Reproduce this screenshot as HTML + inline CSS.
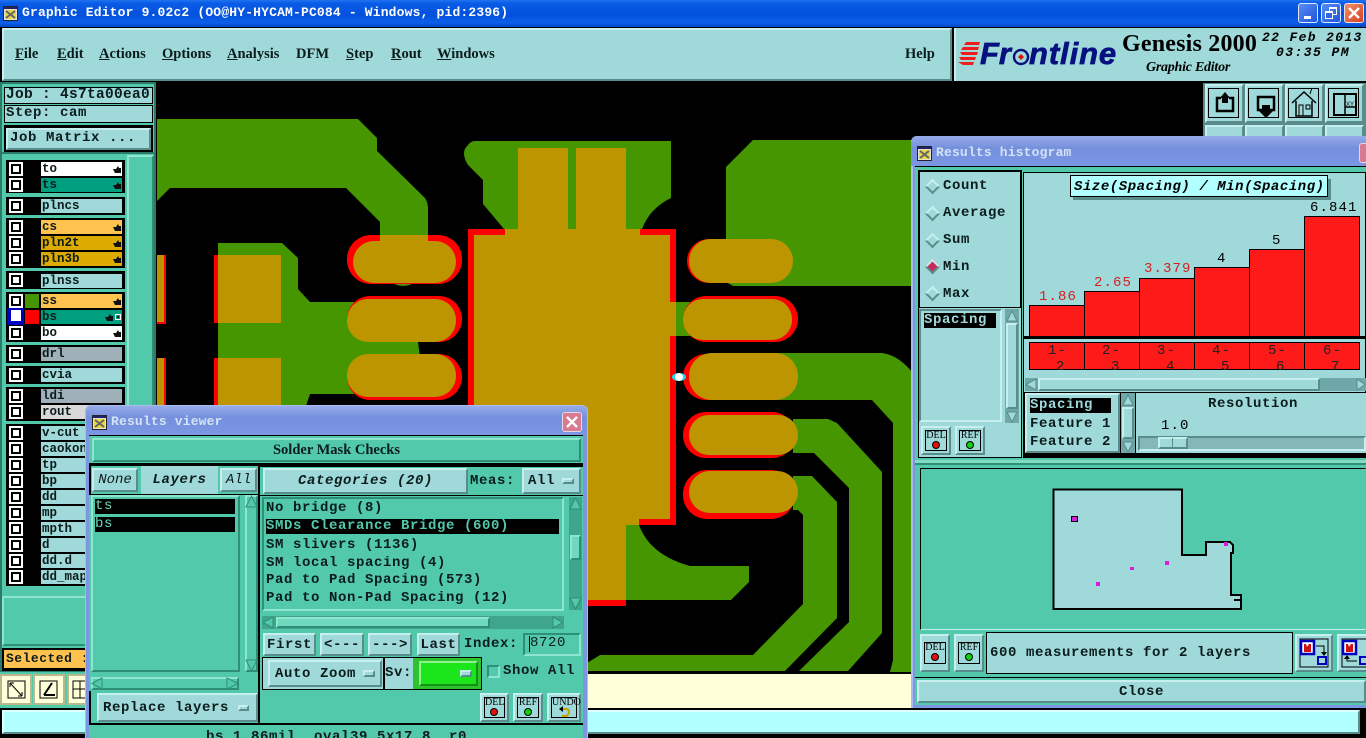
<!DOCTYPE html>
<html><head><meta charset="utf-8"><title>Graphic Editor</title>
<style>
html,body{margin:0;padding:0;width:1366px;height:738px;overflow:hidden;background:#000}
#r{position:relative;width:1366px;height:738px;overflow:hidden;background:#52c9aa}
.a{position:absolute;box-sizing:border-box;white-space:pre}
.p{background:#9fd9d9}
.t{background:#52c9aa}
.bv{border:2px solid;border-color:#c6efef #5a8c8c #5a8c8c #c6efef}
.tv{border:2px solid;border-color:#8fe6cf #2f8f76 #2f8f76 #8fe6cf}
.sk{border:2px solid;border-color:#2f8f76 #8fe6cf #8fe6cf #2f8f76}
.m{font:bold 14px/16px "Liberation Mono",monospace;letter-spacing:.6px;color:#0c1c1c}
.c{display:flex;align-items:center;justify-content:center}
.k{background:#000}
.tb{font:bold 13px/16px "Liberation Mono",monospace;letter-spacing:.17px}
.mn{font:bold 14.5px/18px "Liberation Serif",serif;color:#0c1c1c;top:45px}
.mn u{text-decoration:underline}
.lb{left:41px;width:81px;height:14px;font:bold 12.5px/14px "Liberation Mono",monospace;color:#0c1c1c;padding-left:1px;overflow:hidden}
.cb{left:9px;width:14px;height:14px;background:#fff;padding:2px}
.cb i{display:block;width:10px;height:10px;border:2px solid #000;background:#fff;box-sizing:border-box}
.rb{width:11px;height:11px;transform:rotate(45deg);left:927px;border:2px solid;border-color:#c6efef #5a8c8c #5a8c8c #c6efef;background:#9fd9d9}
.v{font:14px/16px "Liberation Mono",monospace;letter-spacing:1.1px}
.sm{font:10px/10px "Liberation Serif",serif;color:#000;text-align:center}
.dot{width:8px;height:8px;border-radius:50%;border:1px solid #000}
.bar{background:#ff1a1a;border:1px solid #000;width:56px}
.fr{border:1px solid #000;left:1px;top:2px;width:31px;height:30px}
</style></head><body><div id="r">

<!-- title bar -->
<div class="a" style="left:0;top:0;width:1366px;height:27px;background:linear-gradient(#1f74f0 0,#0a5ce6 12%,#0351dc 55%,#0b5fe8 85%,#0344c8 100%)"></div>
<svg class="a" style="left:3px;top:6px" width="15" height="15"><rect x=".5" y=".5" width="14" height="14" fill="#e8e4c8" stroke="#223"/><rect x="1" y="1" width="13" height="2" fill="#226"/><rect x="2" y="4" width="11" height="9" fill="#e6d84a"/><path d="M3 5l9 7M12 5l-9 7" stroke="#666" stroke-width="2"/></svg>
<div class="a tb" style="left:22px;top:5px;color:#fff">Graphic Editor 9.02c2 (OO@HY-HYCAM-PC084 - Windows, pid:2396)</div>
<div class="a" style="left:1298px;top:3px;width:20px;height:20px;border:1px solid #dfe8ff;border-radius:3px;background:linear-gradient(135deg,#5a8cf5,#1f55d8)"><div class="a" style="left:5px;top:12px;width:7px;height:3px;background:#fff"></div></div>
<div class="a" style="left:1321px;top:3px;width:20px;height:20px;border:1px solid #dfe8ff;border-radius:3px;background:linear-gradient(135deg,#5a8cf5,#1f55d8)"><div class="a" style="left:7px;top:3px;width:8px;height:8px;border:1px solid #fff;border-top-width:2px"></div><div class="a" style="left:3px;top:7px;width:8px;height:8px;border:1px solid #fff;border-top-width:2px;background:#2f66e0"></div></div>
<div class="a c" style="left:1344px;top:3px;width:20px;height:20px;border:1px solid #f0e0e0;border-radius:3px;background:linear-gradient(135deg,#ef8f70,#d8401c)"><svg width="12" height="12"><path d="M1 1l10 10M11 1L1 11" stroke="#fff" stroke-width="2.4"/></svg></div>

<!-- menu -->
<div class="a k" style="left:0;top:27px;width:1366px;height:56px"></div>
<div class="a p bv" style="left:2px;top:28px;width:950px;height:53px"></div>
<div class="a mn" style="left:15px"><u>F</u>ile</div>
<div class="a mn" style="left:57px"><u>E</u>dit</div>
<div class="a mn" style="left:99px"><u>A</u>ctions</div>
<div class="a mn" style="left:162px"><u>O</u>ptions</div>
<div class="a mn" style="left:227px"><u>A</u>nalysis</div>
<div class="a mn" style="left:296px">DFM</div>
<div class="a mn" style="left:346px"><u>S</u>tep</div>
<div class="a mn" style="left:391px"><u>R</u>out</div>
<div class="a mn" style="left:437px"><u>W</u>indows</div>
<div class="a mn" style="left:905px">Help</div>
<div class="a p" style="left:954px;top:28px;width:412px;height:53px;border-left:2px solid #c6efef"></div>
<svg class="a" style="left:958px;top:40px" width="26" height="26"><path d="M8 2h14l-1 3H6zM5 7h16l-1 3H3zM2 12h18l-1 3H4zM1 17h17l-1 3H3zM0 22h16l-1 3H5z" fill="#f01c1c"/></svg>
<div class="a" style="left:980px;top:36px;font:italic bold 31px/36px 'Liberation Sans',sans-serif;color:#06107e;-webkit-text-stroke:.7px #06107e">Fr</div>
<svg class="a" style="left:1012px;top:47px" width="18" height="20"><circle cx="9" cy="10" r="7" fill="none" stroke="#06107e" stroke-width="2.4"/><path d="M9 7l3 3-3 3-3-3z" fill="#e01010"/></svg>
<div class="a" style="left:1029px;top:36px;font:italic bold 31px/36px 'Liberation Sans',sans-serif;color:#06107e;letter-spacing:.9px;-webkit-text-stroke:.7px #06107e">ntline</div>
<div class="a" style="left:1122px;top:29px;font:bold 24px/30px 'Liberation Serif',serif;color:#000;letter-spacing:.2px">Genesis 2000</div>
<div class="a" style="left:1146px;top:60px;font:italic bold 14px/16px 'Liberation Serif',serif;color:#000;letter-spacing:-.25px">Graphic Editor</div>
<div class="a" style="left:1262px;top:30px;font:italic bold 13px/16px 'Liberation Mono',monospace;color:#000;letter-spacing:1.35px">22 Feb 2013</div>
<div class="a" style="left:1276px;top:45px;font:italic bold 13px/16px 'Liberation Mono',monospace;color:#000;letter-spacing:1.45px">03:35 PM</div>

<!-- canvas -->
<svg class="a" style="left:0;top:0" width="1366" height="738">
<rect x="156" y="82" width="1210" height="592" fill="#000"/>
<rect x="588" y="674" width="330" height="36" fill="#ffffd9"/>
<g fill="#459600">
<path d="M157 119H358L377 138V151L425 198Q428 203 428 208V237H380V222L346 188H170L157 201Z"/>
<path d="M218 243H282L298 258V289L310 302H380V342H418L420 357H380V394H310L306 406H281V358H218Z"/>
<circle cx="403" cy="265" r="21"/>
<path d="M475 141H671V198Q650 208 642 229H504L483 204V180L468 165Q460 152 468 145Q471 141 475 141Z"/>
<path d="M726 167L753 140H912V286H733L726 282Z"/>
<rect x="676" y="302" width="16" height="34"/>
<path d="M733 353H882Q898 355 912 372V672H890L893 660V423L872 400H733Z"/>
<path d="M793 419H828L837 423L882 472V633L848 671H799L849 622V488L814 453H793Z"/>
<path d="M793 476H812L837 502V618L785 671H587V663L600 655H753L803 604V515L798 510H793Z"/>
<path d="M626 525H639Q650 555 690 566H749V582L731 600H626Z"/>
</g>
<g fill="#f00">
<rect x="164" y="255" width="2" height="69"/><rect x="157" y="322" width="9" height="2"/>
<rect x="164" y="358" width="2" height="48"/>
<rect x="214" y="255" width="5" height="68"/><rect x="214" y="358" width="5" height="48"/>
<rect x="347" y="235" width="115" height="49" rx="24"/>
<rect x="347" y="296" width="115" height="46" rx="23"/>
<rect x="347" y="354" width="115" height="46" rx="23"/>
<rect x="468" y="229" width="37" height="6"/><rect x="468" y="229" width="6" height="300"/>
<rect x="640" y="229" width="36" height="6"/><rect x="670" y="229" width="6" height="296"/>
<rect x="639" y="519" width="37" height="6"/>
<rect x="588" y="600" width="38" height="6"/>
<rect x="687" y="239" width="60" height="44" rx="22"/>
<rect x="683" y="296" width="115" height="46" rx="23"/>
<rect x="683" y="354" width="60" height="46" rx="23"/>
<rect x="683" y="412" width="112" height="46" rx="23"/>
<rect x="683" y="470" width="112" height="49" rx="24"/>
</g>
<g fill="#bd9500">
<rect x="157" y="255" width="7" height="67"/><rect x="157" y="358" width="7" height="48"/>
<rect x="218" y="255" width="63" height="68"/><rect x="218" y="358" width="63" height="48"/>
<rect x="380" y="235" width="48" height="12"/>
<rect x="353" y="241" width="103" height="42" rx="21"/>
<rect x="347" y="299" width="109" height="43" rx="21"/>
<rect x="347" y="354" width="109" height="43" rx="21"/>
<rect x="474" y="235" width="196" height="284"/>
<rect x="505" y="229" width="135" height="6"/>
<rect x="518" y="148" width="50" height="85"/><rect x="576" y="148" width="50" height="85"/>
<rect x="474" y="519" width="165" height="6"/>
<rect x="474" y="525" width="152" height="75"/>
<rect x="670" y="302" width="6" height="34"/>
<rect x="689" y="239" width="104" height="44" rx="22"/>
<rect x="683" y="299" width="109" height="41" rx="20"/>
<rect x="689" y="353" width="109" height="47" rx="23"/>
<rect x="689" y="415" width="109" height="40" rx="20"/>
<rect x="689" y="471" width="109" height="42" rx="21"/>
</g>
<ellipse cx="679" cy="377" rx="7" ry="4" fill="#22d8e8"/><ellipse cx="679" cy="377" rx="4" ry="4" fill="#fff"/>
</svg>

<!-- icon buttons -->
<div class="a" style="left:1203px;top:83px;width:163px;height:60px;background:#5a8c8c"></div>
<div class="a p bv" style="left:1205px;top:84px;width:39px;height:39px"><div class="a fr"></div></div>
<div class="a p bv" style="left:1245px;top:84px;width:39px;height:39px"><div class="a fr"></div></div>
<div class="a p bv" style="left:1285px;top:84px;width:39px;height:39px"><div class="a fr"></div></div>
<div class="a p bv" style="left:1325px;top:84px;width:39px;height:39px"><div class="a fr"></div></div>
<svg class="a" style="left:1203px;top:83px" width="163" height="42">
<path d="M18 15H14V28H30V15H26" fill="none" stroke="#000" stroke-width="2.500"/><path d="M22 9L27 15H25V20H19V15H17Z" fill="#000"/>
<path d="M59 27H55V14H71V27H67" fill="none" stroke="#000" stroke-width="2.500"/><path d="M59 22H67V28H70L63 35L56 28H59Z" fill="#000"/>
<path d="M89 20L101 9L113 20M93 18V33H109V18" fill="none" stroke="#000" stroke-width="1.500"/><rect x="96" y="22" width="4" height="11" fill="none" stroke="#000"/><rect x="103" y="22" width="4" height="4" fill="none" stroke="#000"/><path d="M107 11L109 5" stroke="#000"/>
<rect x="131" y="11" width="22" height="21" fill="none" stroke="#000" stroke-width="2"/><path d="M142 11V32M142 24H153" stroke="#000" stroke-width="1.500"/>
</svg>
<div class="a" style="left:1346px;top:102px;font:6px/7px 'Liberation Sans';color:#000">XY</div>
<div class="a p bv" style="left:1205px;top:125px;width:39px;height:20px"></div>
<div class="a p bv" style="left:1245px;top:125px;width:39px;height:20px"></div>
<div class="a p bv" style="left:1285px;top:125px;width:39px;height:20px"></div>
<div class="a p bv" style="left:1325px;top:125px;width:39px;height:20px"></div>

<!-- left panel -->
<div class="a" style="left:0;top:82px;width:156px;height:600px;background:#2e7a68"></div>
<div class="a t" style="left:2px;top:84px;width:152px;height:68px"></div>
<div class="a p m" style="left:4px;top:87px;width:149px;height:17px;border:1px solid #000;padding-left:1px;line-height:14px;font-size:14.5px;letter-spacing:.3px">Job : 4s7ta00ea0</div>
<div class="a p m" style="left:4px;top:105px;width:149px;height:18px;border:1px solid #000;padding-left:1px;line-height:15px">Step: cam</div>
<div class="a k" style="left:4px;top:125px;width:149px;height:27px"></div>
<div class="a p m bv" style="left:6px;top:128px;width:145px;height:22px;padding-left:2px;line-height:17px">Job Matrix ...</div>
<div class="a t" style="left:2px;top:154px;width:152px;height:496px"></div>
<div class="a tv" style="left:127px;top:155px;width:27px;height:270px;background:#52c9aa"></div>

<div class="a k" style="left:6px;top:160px;width:119px;height:33px"></div>
<div class="a k" style="left:6px;top:197px;width:119px;height:18px"></div>
<div class="a k" style="left:6px;top:218px;width:119px;height:50px"></div>
<div class="a k" style="left:6px;top:271px;width:119px;height:18px"></div>
<div class="a k" style="left:6px;top:292px;width:119px;height:50px"></div>
<div class="a k" style="left:6px;top:345px;width:119px;height:18px"></div>
<div class="a k" style="left:6px;top:366px;width:119px;height:18px"></div>
<div class="a k" style="left:6px;top:387px;width:119px;height:34px"></div>
<div class="a k" style="left:6px;top:424px;width:119px;height:162px"></div>

<div class="a lb" style="top:162px;background:#fff">to</div>
<div class="a lb" style="top:178px;background:#009f7f">ts</div>
<div class="a lb" style="top:199px;background:#9fd9d9">plncs</div>
<div class="a lb" style="top:220px;background:#ffc34f">cs</div>
<div class="a lb" style="top:236px;background:#dcaa00">pln2t</div>
<div class="a lb" style="top:252px;background:#dcaa00">pln3b</div>
<div class="a lb" style="top:274px;background:#9fd9d9">plnss</div>
<div class="a lb" style="top:294px;background:#ffc34f">ss</div>
<div class="a lb" style="top:310px;background:#009f7f">bs</div>
<div class="a lb" style="top:326px;background:#fff">bo</div>
<div class="a lb" style="top:347px;background:#9fb0b8">drl</div>
<div class="a lb" style="top:368px;background:#9fd9d9">cvia</div>
<div class="a lb" style="top:389px;background:#9fb0b8">ldi</div>
<div class="a lb" style="top:405px;background:#d9d9d9">rout</div>
<div class="a lb" style="top:426px;background:#9fd9d9">v-cut</div>
<div class="a lb" style="top:442px;background:#9fd9d9">caokon</div>
<div class="a lb" style="top:458px;background:#9fd9d9">tp</div>
<div class="a lb" style="top:474px;background:#9fd9d9">bp</div>
<div class="a lb" style="top:490px;background:#9fd9d9">dd</div>
<div class="a lb" style="top:506px;background:#9fd9d9">mp</div>
<div class="a lb" style="top:522px;background:#9fd9d9">mpth</div>
<div class="a lb" style="top:538px;background:#9fd9d9">d</div>
<div class="a lb" style="top:554px;background:#9fd9d9">dd.d</div>
<div class="a lb" style="top:570px;background:#9fd9d9">dd_map</div>

<div class="a cb" style="top:162px"><i></i></div><div class="a cb" style="top:178px"><i></i></div>
<div class="a cb" style="top:199px"><i></i></div><div class="a cb" style="top:220px"><i></i></div>
<div class="a cb" style="top:236px"><i></i></div><div class="a cb" style="top:252px"><i></i></div>
<div class="a cb" style="top:273px"><i></i></div><div class="a cb" style="top:294px"><i></i></div>
<div class="a" style="left:7px;top:308px;width:17px;height:17px;background:#0000c0"></div>
<div class="a cb" style="top:310px;left:11px;width:10px;height:11px;padding:0;background:#fff"></div>
<div class="a cb" style="top:326px"><i></i></div><div class="a cb" style="top:347px"><i></i></div>
<div class="a cb" style="top:368px"><i></i></div><div class="a cb" style="top:389px"><i></i></div>
<div class="a cb" style="top:405px"><i></i></div><div class="a cb" style="top:426px"><i></i></div>
<div class="a cb" style="top:442px"><i></i></div><div class="a cb" style="top:458px"><i></i></div>
<div class="a cb" style="top:474px"><i></i></div><div class="a cb" style="top:490px"><i></i></div>
<div class="a cb" style="top:506px"><i></i></div><div class="a cb" style="top:522px"><i></i></div>
<div class="a cb" style="top:538px"><i></i></div><div class="a cb" style="top:554px"><i></i></div>
<div class="a cb" style="top:570px"><i></i></div>
<div class="a" style="left:25px;top:294px;width:14px;height:14px;background:#459600"></div>
<div class="a" style="left:25px;top:310px;width:14px;height:14px;background:#f00"></div>

<svg class="a" style="left:0;top:0" width="140" height="350"><defs><path id="h" d="M0 3L3 3L5 0L6 2L8 2V7H2Z" fill="#111"/></defs>
<use href="#h" x="113" y="166"/><use href="#h" x="113" y="182"/><use href="#h" x="113" y="224"/><use href="#h" x="113" y="240"/><use href="#h" x="113" y="256"/><use href="#h" x="113" y="298"/><use href="#h" x="105" y="314"/><use href="#h" x="113" y="330"/>
<rect x="115.500" y="314.500" width="5" height="5" fill="none" stroke="#fff"/><rect x="117" y="316" width="2" height="2" fill="#111"/></svg>

<div class="a tv" style="left:2px;top:596px;width:90px;height:50px;background:#52c9aa"></div>
<div class="a m k" style="left:2px;top:648px;width:90px;height:23px"></div>
<div class="a m" style="left:4px;top:650px;width:90px;height:18px;background:#ffc24f;font-size:13px;padding-left:2px;line-height:17px;letter-spacing:.5px;overflow:hidden">Selected : 0</div>
<div class="a" style="left:0;top:672px;width:92px;height:37px;background:#52c9aa;border-bottom:1px solid #000"></div>
<svg class="a" style="left:0;top:674px" width="92" height="32">
<rect x="1" y="1" width="30" height="29" fill="#ffffd9" stroke="#b9b98e" stroke-width="2"/><rect x="8" y="7" width="17" height="17" fill="none" stroke="#000"/><path d="M10 9L22 22M10 9h4M10 9v4M22 22h-4M22 22v-4" stroke="#000" fill="none"/>
<rect x="34" y="1" width="30" height="29" fill="#ffffd9" stroke="#b9b98e" stroke-width="2"/><rect x="40" y="7" width="17" height="17" fill="none" stroke="#000"/><path d="M44 21L52 9M44 21H55" stroke="#000" stroke-width="2" fill="none"/>
<rect x="68" y="1" width="24" height="29" fill="#ffffd9" stroke="#b9b98e" stroke-width="2"/><rect x="73" y="7" width="14" height="17" fill="none" stroke="#000"/><path d="M73 15H87M80 7V24" stroke="#000"/></svg>
<div class="a k" style="left:0;top:708px;width:1366px;height:30px"></div>
<div class="a bv" style="left:2px;top:710px;width:1358px;height:24px;background:#b2ffff;border-color:#dcffff #5a8c8c #5a8c8c #dcffff"></div>

<!-- Results histogram window -->
<div class="a" style="left:911px;top:136px;width:455px;height:572px;background:#7d96e0;border-radius:6px 0 0 0;border-left:2px solid #a8bcf0"></div>
<div class="a" style="left:911px;top:136px;width:455px;height:30px;background:linear-gradient(#97abe8,#7590dd 40%,#7b96e2);border-radius:6px 0 0 0"></div>
<svg class="a" style="left:917px;top:146px" width="15" height="15"><rect x=".5" y=".5" width="14" height="14" fill="#e8e4c8" stroke="#223"/><rect x="1" y="1" width="13" height="2" fill="#226"/><rect x="2" y="4" width="11" height="9" fill="#e6d84a"/><path d="M3 5l9 7M12 5l-9 7" stroke="#666" stroke-width="2"/></svg>
<div class="a tb" style="left:936px;top:145px;color:#d4e2f6">Results histogram</div>
<div class="a" style="left:1359px;top:143px;width:10px;height:20px;background:#d87a90;border:1px solid #e6d8e4;border-radius:3px"></div>
<div class="a t" style="left:915px;top:166px;width:451px;height:539px;border-top:1px solid #000"></div>

<div class="a p" style="left:918px;top:170px;width:104px;height:139px;border:2px solid #000"></div>
<div class="a rb" style="top:181px"></div><div class="a m" style="left:943px;top:178px">Count</div>
<div class="a rb" style="top:208px"></div><div class="a m" style="left:943px;top:205px">Average</div>
<div class="a rb" style="top:235px"></div><div class="a m" style="left:943px;top:232px">Sum</div>
<div class="a rb" style="top:261px;background:#c8285a"></div><div class="a m" style="left:943px;top:259px">Min</div>
<div class="a rb" style="top:288px"></div><div class="a m" style="left:943px;top:286px">Max</div>
<div class="a p" style="left:918px;top:308px;width:104px;height:150px;border:1px solid #000;border-top-width:0"></div>
<div class="a bv" style="left:919px;top:309px;width:83px;height:113px;border-color:#5a8c8c #c6efef #c6efef #5a8c8c"></div>
<div class="a m" style="left:924px;top:313px;width:72px;height:15px;background:#000;color:#9fd9d9;line-height:15px">Spacing</div>
<div class="a" style="left:1005px;top:309px;width:14px;height:114px;background:#6fa8a8"></div>
<div class="a p bv" style="left:1006px;top:323px;width:12px;height:86px"></div>
<svg class="a" style="left:1006px;top:310px" width="12" height="113"><path d="M6 1L11 11H1Z" fill="#9fd9d9" stroke="#5a8c8c"/><path d="M6 112L11 102H1Z" fill="#9fd9d9" stroke="#5a8c8c"/></svg>
<div class="a p bv" style="left:921px;top:426px;width:30px;height:29px"></div>
<div class="a p bv" style="left:955px;top:426px;width:30px;height:29px"></div>
<div class="a sm p" style="left:925px;top:430px;width:22px;height:21px;border:1px solid #000">DEL</div><div class="a dot" style="left:932px;top:441px;background:#e01010"></div>
<div class="a sm p" style="left:959px;top:430px;width:22px;height:21px;border:1px solid #000">REF</div><div class="a dot" style="left:966px;top:441px;background:#10d010"></div>

<div class="a p" style="left:1023px;top:172px;width:343px;height:221px;border:1px solid #000"></div>
<div class="a" style="left:1073px;top:179px;width:258px;height:21px;background:#5a8c8c"></div>
<div class="a" style="left:1070px;top:175px;width:258px;height:22px;background:#b2ffff;border:1px solid #000"></div>
<div class="a" style="left:1074px;top:179px;font:italic bold 14px/16px 'Liberation Mono',monospace;letter-spacing:.55px;color:#000">Size(Spacing) / Min(Spacing)</div>
<div class="a bar" style="left:1029px;top:305px;height:32px"></div>
<div class="a bar" style="left:1084px;top:291px;height:46px"></div>
<div class="a bar" style="left:1139px;top:278px;height:59px"></div>
<div class="a bar" style="left:1194px;top:267px;height:70px"></div>
<div class="a bar" style="left:1249px;top:249px;height:88px"></div>
<div class="a bar" style="left:1304px;top:216px;height:121px"></div>
<div class="a v" style="left:1039px;top:289px;color:#d62020">1.86</div>
<div class="a v" style="left:1094px;top:275px;color:#d62020">2.65</div>
<div class="a v" style="left:1144px;top:261px;color:#d62020">3.379</div>
<div class="a v" style="left:1217px;top:251px;color:#000">4</div>
<div class="a v" style="left:1272px;top:233px;color:#000">5</div>
<div class="a v" style="left:1310px;top:200px;color:#000">6.841</div>
<div class="a k" style="left:1024px;top:336px;width:342px;height:3px"></div>
<div class="a bar" style="left:1029px;top:342px;height:28px"></div><div class="a bar" style="left:1084px;top:342px;height:28px"></div><div class="a bar" style="left:1139px;top:342px;height:28px"></div><div class="a bar" style="left:1194px;top:342px;height:28px"></div><div class="a bar" style="left:1249px;top:342px;height:28px"></div><div class="a bar" style="left:1304px;top:342px;height:28px"></div>
<div class="a v" style="left:1048px;top:343px;color:#222;height:16px">1-</div><div class="a v" style="left:1056px;top:359px;color:#222;height:11px;overflow:hidden">2</div>
<div class="a v" style="left:1102px;top:343px;color:#222">2-</div><div class="a v" style="left:1111px;top:359px;color:#222;height:11px;overflow:hidden">3</div>
<div class="a v" style="left:1157px;top:343px;color:#222">3-</div><div class="a v" style="left:1166px;top:359px;color:#222;height:11px;overflow:hidden">4</div>
<div class="a v" style="left:1212px;top:343px;color:#222">4-</div><div class="a v" style="left:1221px;top:359px;color:#222;height:11px;overflow:hidden">5</div>
<div class="a v" style="left:1268px;top:343px;color:#222">5-</div><div class="a v" style="left:1276px;top:359px;color:#222;height:11px;overflow:hidden">6</div>
<div class="a v" style="left:1323px;top:343px;color:#222">6-</div><div class="a v" style="left:1331px;top:359px;color:#222;height:11px;overflow:hidden">7</div>
<div class="a" style="left:1025px;top:378px;width:341px;height:13px;background:#6fa8a8"></div>
<div class="a p bv" style="left:1038px;top:378px;width:282px;height:13px"></div>
<svg class="a" style="left:1025px;top:378px" width="341" height="13"><path d="M1 6.500L11 1V12Z" fill="#9fd9d9" stroke="#5a8c8c"/><path d="M340 6.500L332 1V12Z" fill="#9fd9d9" stroke="#5a8c8c"/></svg>

<div class="a k" style="left:1023px;top:392px;width:343px;height:66px"></div>
<div class="a p bv" style="left:1025px;top:393px;width:95px;height:60px"></div>
<div class="a m" style="left:1030px;top:398px;width:81px;height:15px;background:#000;color:#9fd9d9;line-height:15px">Spacing</div>
<div class="a m" style="left:1030px;top:416px">Feature 1</div>
<div class="a m" style="left:1030px;top:434px">Feature 2</div>
<div class="a" style="left:1121px;top:393px;width:14px;height:60px;background:#6fa8a8"></div>
<div class="a p bv" style="left:1122px;top:407px;width:12px;height:32px"></div>
<svg class="a" style="left:1122px;top:394px" width="12" height="59"><path d="M6 1L11 11H1Z" fill="#9fd9d9" stroke="#5a8c8c"/><path d="M6 58L11 48H1Z" fill="#9fd9d9" stroke="#5a8c8c"/></svg>
<div class="a p" style="left:1136px;top:393px;width:230px;height:60px"></div>
<div class="a m" style="left:1208px;top:396px">Resolution</div>
<div class="a v" style="left:1161px;top:418px;color:#000">1.0</div>
<div class="a" style="left:1138px;top:436px;width:228px;height:15px;background:#84b8b8;border:2px solid;border-color:#5a8c8c #c6efef #c6efef #5a8c8c"></div>
<div class="a p bv" style="left:1158px;top:437px;width:30px;height:12px"></div><div class="a" style="left:1172px;top:438px;width:1px;height:10px;background:#5a8c8c"></div>

<div class="a" style="left:915px;top:460px;width:451px;height:5px;background:#7fdcc0;border-bottom:2px solid #2f8f76"></div>
<div class="a" style="left:920px;top:468px;width:446px;height:162px;border:1px solid #000;border-color:#000 transparent #c6efef #000;background:#52c9aa"></div>
<svg class="a" style="left:0;top:0;pointer-events:none" width="1366" height="738">
<path d="M1053.500 489.500H1182V555H1206V542H1230L1233 545V553H1231V595H1241V609H1053.500Z" fill="#9fd9d9" stroke="#000" stroke-width="2"/>
<path d="M1234 600H1241" stroke="#000" stroke-width="2"/>
<rect x="1071" y="516" width="7" height="6" fill="#000"/><rect x="1072" y="517" width="5" height="4" fill="#d81fd8"/>
<g fill="#d81fd8"><rect x="1224" y="542" width="4" height="4"/><rect x="1130" y="567" width="4" height="3"/><rect x="1165" y="561" width="4" height="4"/><rect x="1096" y="582" width="4" height="4"/></g></svg>
<div class="a p bv" style="left:920px;top:634px;width:30px;height:38px"></div>
<div class="a p bv" style="left:954px;top:634px;width:30px;height:38px"></div>
<div class="a sm p" style="left:924px;top:642px;width:22px;height:22px;border:1px solid #000">DEL</div><div class="a dot" style="left:931px;top:653px;background:#e01010"></div>
<div class="a sm p" style="left:958px;top:642px;width:22px;height:22px;border:1px solid #000">REF</div><div class="a dot" style="left:965px;top:653px;background:#10d010"></div>
<div class="a p m" style="left:986px;top:632px;width:307px;height:42px;border:1px solid #000;padding:12px 0 0 3px">600 measurements for 2 layers</div>
<div class="a p bv" style="left:1295px;top:634px;width:38px;height:38px"></div>
<div class="a p bv" style="left:1337px;top:634px;width:38px;height:38px"></div>
<svg class="a" style="left:1295px;top:634px" width="71" height="38"><rect x="5" y="5" width="28" height="28" fill="none" stroke="#000"/><rect x="6" y="7" width="13" height="13" fill="#fff" stroke="#0000c0" stroke-width="2.500"/><path d="M9 10h2l1 3 2-3h2v8H9z" fill="#d01010"/><rect x="23" y="23" width="8" height="7" fill="none" stroke="#0000c0" stroke-width="2"/><path d="M21 12H29V20" fill="none" stroke="#000"/><path d="M26 18H32L29 22Z" fill="#000"/>
<rect x="47" y="5" width="28" height="28" fill="none" stroke="#000"/><rect x="48" y="7" width="13" height="13" fill="#fff" stroke="#0000c0" stroke-width="2.500"/><path d="M51 10h2l1 3 2-3h2v8h-7z" fill="#d01010"/><rect x="65" y="23" width="8" height="7" fill="none" stroke="#0000c0" stroke-width="2"/><path d="M52 22V27H62" fill="none" stroke="#000"/><path d="M49 25H55L52 21Z" fill="#000"/></svg>
<div class="a k" style="left:915px;top:677px;width:451px;height:1px"></div>
<div class="a p bv m c" style="left:917px;top:680px;width:449px;height:23px">Close</div>

<!-- Results viewer -->
<div class="a" style="left:85px;top:405px;width:503px;height:333px;background:#7d96e0;border-radius:6px 6px 0 0;border:1px solid #a8bcf0;border-bottom:0"></div>
<div class="a" style="left:86px;top:406px;width:501px;height:29px;background:linear-gradient(#97abe8,#7590dd 40%,#7b96e2);border-radius:6px 6px 0 0"></div>
<svg class="a" style="left:92px;top:415px" width="15" height="15"><rect x=".5" y=".5" width="14" height="14" fill="#e8e4c8" stroke="#223"/><rect x="1" y="1" width="13" height="2" fill="#226"/><rect x="2" y="4" width="11" height="9" fill="#e6d84a"/><path d="M3 5l9 7M12 5l-9 7" stroke="#666" stroke-width="2"/></svg>
<div class="a tb" style="left:111px;top:414px;color:#d4e2f6">Results viewer</div>
<div class="a c" style="left:562px;top:412px;width:20px;height:20px;background:#d87a90;border:1px solid #e6d8e4;border-radius:3px"><svg width="12" height="12"><path d="M1 1l10 10M11 1L1 11" stroke="#fff" stroke-width="2.400"/></svg></div>
<div class="a t" style="left:89px;top:435px;width:494px;height:303px;border-top:1px solid #000"></div>
<div class="a t tv c" style="left:92px;top:438px;width:489px;height:24px;font:bold 14.500px/16px 'Liberation Serif',serif;color:#0c1c1c">Solder Mask Checks</div>
<div class="a k" style="left:89px;top:463px;width:494px;height:2px"></div>

<div class="a k" style="left:89px;top:465px;width:170px;height:30px"></div>
<div class="a t" style="left:91px;top:466px;width:167px;height:28px"></div>
<div class="a p bv c" style="left:92px;top:468px;width:46px;height:24px;font:italic 14px/16px 'Liberation Mono',monospace;color:#0c1c1c">None</div>
<div class="a p c" style="left:141px;top:466px;width:77px;height:28px;font:italic bold 14px/16px 'Liberation Mono',monospace;color:#0c1c1c;letter-spacing:.6px">Layers</div>
<div class="a p bv c" style="left:220px;top:468px;width:37px;height:24px;font:italic 14px/16px 'Liberation Mono',monospace;color:#0c1c1c">All</div>
<div class="a t tv" style="left:91px;top:495px;width:149px;height:177px"></div>
<div class="a m" style="left:95px;top:499px;width:140px;height:15px;background:#000;color:#6fd9bd;line-height:15px;font-weight:normal">ts</div>
<div class="a m" style="left:95px;top:517px;width:140px;height:15px;background:#000;color:#6fd9bd;line-height:15px;font-weight:normal">bs</div>
<div class="a tv" style="left:245px;top:495px;width:13px;height:177px;background:#52c9aa"></div>
<svg class="a" style="left:245px;top:495px" width="13" height="177"><path d="M6.500 1L12 12H1Z" fill="#52c9aa" stroke="#2f8f76"/><path d="M6.500 176L12 165H1Z" fill="#52c9aa" stroke="#2f8f76"/></svg>
<div class="a tv" style="left:91px;top:677px;width:148px;height:13px;background:#52c9aa"></div>
<svg class="a" style="left:91px;top:677px" width="148" height="13"><path d="M1 6.500L11 1V12Z" fill="#52c9aa" stroke="#2f8f76"/><path d="M147 6.500L136 1V12Z" fill="#52c9aa" stroke="#2f8f76"/></svg>
<div class="a p bv m" style="left:97px;top:693px;width:161px;height:29px;padding:5px 0 0 4px">Replace layers</div>
<div class="a p bv" style="left:238px;top:705px;width:11px;height:6px"></div>
<div class="a k" style="left:89px;top:691px;width:2px;height:33px"></div><div class="a k" style="left:258px;top:465px;width:2px;height:259px"></div>
<div class="a k" style="left:89px;top:723px;width:494px;height:2px"></div>
<div class="a m" style="left:206px;top:729px">bs 1.86mil  oval39.5x17.8  r0</div>

<div class="a k" style="left:260px;top:465px;width:323px;height:2px"></div>
<div class="a p bv m c" style="left:263px;top:468px;width:205px;height:26px;font-style:italic">Categories (20)</div>
<div class="a m" style="left:470px;top:473px">Meas:</div>
<div class="a p bv m" style="left:522px;top:468px;width:59px;height:26px;padding:3px 0 0 4px">All</div>
<div class="a p bv" style="left:562px;top:478px;width:12px;height:6px"></div>
<div class="a k" style="left:260px;top:495px;width:323px;height:1px"></div>
<div class="a t" style="left:262px;top:497px;width:302px;height:114px;border:2px solid;border-color:#2f8f76 #8fe6cf #8fe6cf #2f8f76"></div>
<div class="a m" style="left:266px;top:500px">No bridge (8)</div>
<div class="a m" style="left:266px;top:519px;width:293px;height:15px;background:#000;color:#52c9aa;line-height:15px">SMDs Clearance Bridge (600)</div>
<div class="a m" style="left:266px;top:537px">SM slivers (1136)</div>
<div class="a m" style="left:266px;top:555px">SM local spacing (4)</div>
<div class="a m" style="left:266px;top:572px">Pad to Pad Spacing (573)</div>
<div class="a m" style="left:266px;top:590px">Pad to Non-Pad Spacing (12)</div>
<div class="a" style="left:569px;top:497px;width:13px;height:113px;background:#3fa68b"></div>
<div class="a tv" style="left:570px;top:535px;width:11px;height:25px;background:#6fd9bd"></div>
<svg class="a" style="left:569px;top:497px" width="13" height="113"><path d="M6.500 1L12 12H1Z" fill="#52c9aa" stroke="#2f8f76"/><path d="M6.500 112L12 101H1Z" fill="#52c9aa" stroke="#2f8f76"/></svg>
<div class="a" style="left:262px;top:616px;width:302px;height:13px;background:#3fa68b"></div>
<div class="a tv" style="left:276px;top:617px;width:214px;height:11px;background:#6fd9bd"></div>
<svg class="a" style="left:262px;top:616px" width="302" height="13"><path d="M1 6.500L11 1V12Z" fill="#52c9aa" stroke="#2f8f76"/><path d="M301 6.500L291 1V12Z" fill="#52c9aa" stroke="#2f8f76"/></svg>
<div class="a p bv m c" style="left:263px;top:633px;width:53px;height:23px">First</div>
<div class="a p bv m c" style="left:320px;top:633px;width:44px;height:23px">&lt;---</div>
<div class="a p bv m c" style="left:368px;top:633px;width:44px;height:23px">---&gt;</div>
<div class="a p bv m c" style="left:417px;top:633px;width:43px;height:23px">Last</div>
<div class="a m" style="left:464px;top:636px">Index:</div>
<div class="a t bv m" style="left:523px;top:633px;width:58px;height:23px;padding:0 0 0 5px;border-color:#2f8f76 #8fe6cf #8fe6cf #2f8f76;font-weight:normal">8720</div>
<div class="a k" style="left:529px;top:636px;width:1px;height:16px"></div>
<div class="a k" style="left:262px;top:657px;width:220px;height:33px"></div>
<div class="a p" style="left:263px;top:658px;width:120px;height:31px"></div>
<div class="a p bv m" style="left:268px;top:660px;width:114px;height:27px;padding:4px 0 0 5px">Auto Zoom</div>
<div class="a p bv" style="left:363px;top:670px;width:12px;height:7px"></div>
<div class="a p m" style="left:385px;top:658px;width:28px;height:31px;padding-top:7px">Sv:</div>
<div class="a" style="left:413px;top:658px;width:68px;height:31px;background:#2ec22e"></div>
<div class="a bv" style="left:419px;top:661px;width:59px;height:25px;background:#1be51b;border-color:#8ff08f #149014 #149014 #8ff08f"></div>
<div class="a bv" style="left:460px;top:670px;width:12px;height:7px;background:#9fd9d9"></div>
<div class="a sk" style="left:487px;top:665px;width:13px;height:13px"></div>
<div class="a m" style="left:503px;top:663px">Show All</div>
<div class="a p bv" style="left:480px;top:693px;width:29px;height:29px"></div>
<div class="a p bv" style="left:513px;top:693px;width:30px;height:29px"></div>
<div class="a p bv" style="left:547px;top:693px;width:34px;height:29px"></div>
<div class="a sm p" style="left:484px;top:697px;width:21px;height:21px;border:1px solid #000">DEL</div><div class="a dot" style="left:490px;top:708px;background:#e01010"></div>
<div class="a sm p" style="left:517px;top:697px;width:22px;height:21px;border:1px solid #000">REF</div><div class="a dot" style="left:524px;top:708px;background:#10d010"></div>
<div class="a sm p" style="left:551px;top:697px;width:26px;height:21px;border:1px solid #000">UNDO</div>
<svg class="a" style="left:558px;top:706px" width="14" height="12"><path d="M3 3H8Q11 3 11 6T8 10H4" fill="none" stroke="#c8a000" stroke-width="2"/><path d="M5 0L1 3L5 6Z" fill="#000"/></svg>
</div></body></html>
